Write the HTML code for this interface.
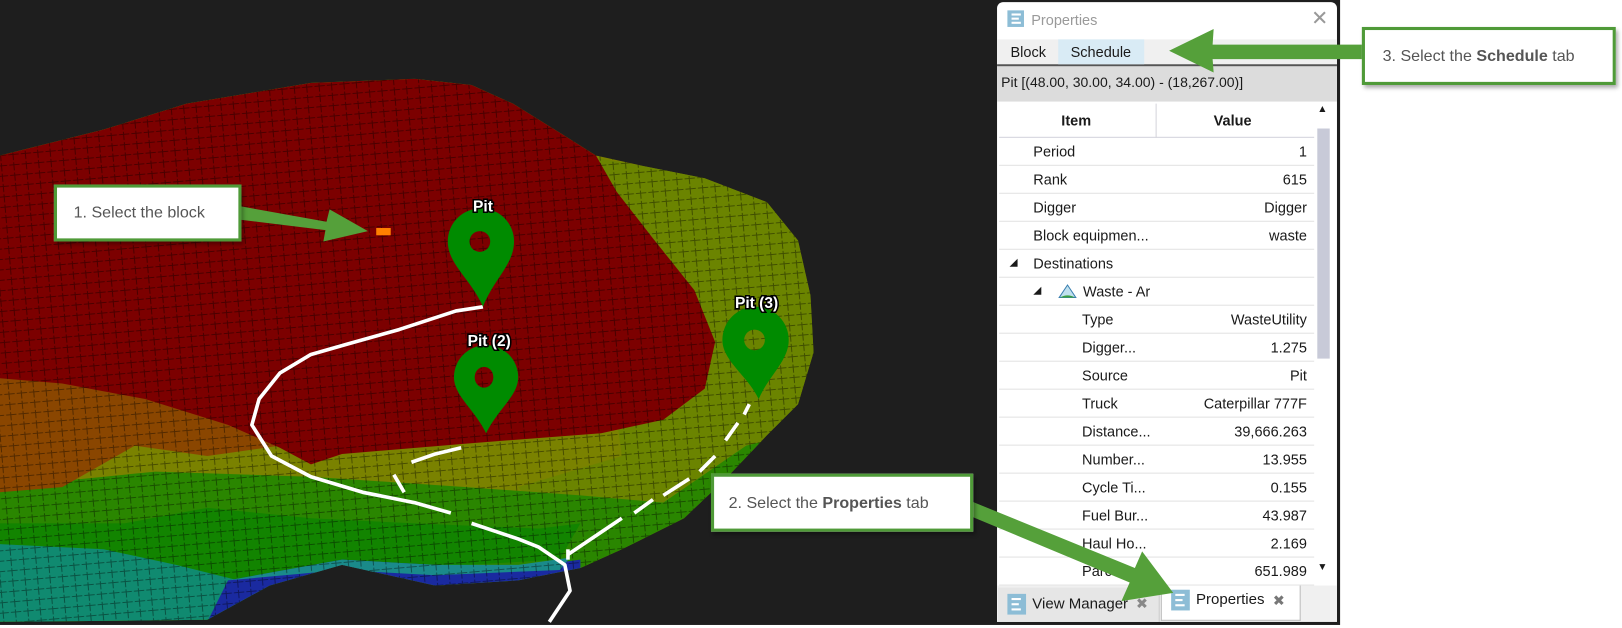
<!DOCTYPE html>
<html><head><meta charset="utf-8"><style>
html,body{margin:0;padding:0;width:1622px;height:628px;overflow:hidden;background:#fff;font-family:"Liberation Sans",sans-serif}
#w{position:absolute;left:0;top:0;width:1565px;height:606px;transform:scale(1.03642);transform-origin:0 0}
.abs{position:absolute}
#panel{position:absolute;left:962px;top:2px;width:328px;height:598px;background:#fff;border-radius:6px 6px 0 0;overflow:hidden;font-size:14px;color:#1a1a1a}
.row{position:absolute;left:2px;width:304px;height:27px;border-bottom:1px solid #e2e2e2;box-sizing:border-box;line-height:26px}
.row .l{position:absolute}
.row .v{position:absolute;right:7px}
.ico{position:absolute;width:16px;height:16px;background:#8dbdd6}
.ico i{position:absolute;left:4px;height:2px;background:#fff}
.call{position:absolute;background:#fff;border:3px solid #4f9a38;box-sizing:border-box;color:#555;font-size:15.5px;box-shadow:2px 3px 4px rgba(0,0,0,.35)}
</style></head><body><div id="w">
<div class="abs" style="left:0;top:0;width:1293px;height:603px;background:#1e1e1e"></div>
<svg class="abs" style="left:0;top:0" width="1293" height="603" viewBox="0 0 1293 603">
<defs>
<pattern id="g" width="12" height="10" patternUnits="userSpaceOnUse" patternTransform="rotate(-5)">
<path d="M0 9.5H12M11.5 0V10" stroke="#000" stroke-opacity=".4" stroke-width="1" stroke-dasharray="5 2" fill="none"/>
</pattern>
<clipPath id="c"><path d="M0 150L100 125L180 100L300 80L400 76L455 82L495 100L540 128L575 150L620 160L680 172L740 195L770 232L782 285L785 340L770 390L740 420L700 462L660 500L600 530L560 548L500 560L420 565L330 545L260 565L200 598L0 600Z"/></clipPath>
</defs>
<g clip-path="url(#c)">
<rect x="0" y="0" width="800" height="603" fill="#7a8200"/>
<path d="M560 150L620 160L680 172L740 195L770 232L782 285L785 340L770 390L740 420L700 462L660 500L600 530L560 548L500 470L600 440Z" fill="#6b8400"/>
<path d="M0 470L150 455L300 460L450 470L560 478L640 485L720 430L760 420L700 480L640 520L560 560L300 600L0 600Z" fill="#2a8600"/>
<path d="M0 505L120 505L200 490L300 500L400 505L520 510L560 505L540 540L450 545L330 545L260 565L0 600Z" fill="#128400"/>
<path d="M0 525L100 530L170 545L230 560L270 572L200 600L0 600Z" fill="#108a70"/>
<path d="M220 560L330 540L420 545L500 548L560 540L560 560L500 565L420 575L330 560L260 580L200 600Z" fill="#1a2aa0"/>
<path d="M220 560L330 540L420 545L500 545L550 538L540 550L420 555L330 550Z" fill="#1a8a8a"/>
<path d="M0 360L130 380L240 400L270 430L200 440L130 430L60 470L0 475Z" fill="#8a4600"/>
<path d="M0 150L100 125L180 100L300 80L400 76L455 82L495 100L540 128L575 150L595 185L630 230L670 280L690 330L680 375L640 405L580 418L450 428L330 438L300 448L270 432L220 410L140 385L60 370L0 365Z" fill="#7c0000"/>
<rect x="0" y="0" width="800" height="603" fill="url(#g)"/>
</g>
<rect x="363" y="220" width="14" height="7" fill="#ff8000"/>
<g fill="none" stroke="#fff" stroke-width="3.5" stroke-linejoin="round">
<path d="M466 296L440 300L385 318L335 332L300 342L270 360L250 385L243 410L262 440L300 460L350 475L400 485L435 495"/>
<path d="M455 505L500 520L520 528L545 545L550 570L530 600"/>
<path d="M397 446L420 438L445 432"/>
<path d="M380 458L390 475"/>
<path d="M548 540L548 530"/>
<path d="M548 535L600 500M612 495L630 482M640 478L665 462M675 455L690 440M700 425L712 408M718 400L723 390"/>
</g>
<g fill="#008b00" fill-rule="evenodd">
<path d="M466 296C455 270 432 255 432 233A32 32 0 0 1 496 233C496 255 476 270 466 296ZM453 233A10 10 0 1 0 473 233A10 10 0 1 0 453 233Z"/>
<path d="M469 418C458 395 438 382 438 364A31 31 0 0 1 500 364C500 382 480 395 469 418ZM458 364A9 10 0 1 0 476 364A9 10 0 1 0 458 364Z"/>
<path d="M732 385C721 362 697 348 697 328A32 32 0 0 1 761 328C761 348 742 362 732 385ZM718 328A10 10 0 1 0 738 328A10 10 0 1 0 718 328Z"/>
</g>
<g font-family="Liberation Sans,sans-serif" font-weight="bold" font-size="15" fill="#fff" stroke="#000" stroke-width="3" paint-order="stroke" text-anchor="middle">
<text x="466" y="204">Pit</text><text x="472" y="334">Pit (2)</text><text x="730" y="297">Pit (3)</text>
</g>
<path d="M232 199L315 214L318 202L355 223L312 233L314 222L232 212Z" fill="#55a03a"/>
</svg>
<div class="call" style="left:52px;top:178px;width:181px;height:55px;line-height:50px;padding-left:16px">1. Select the block</div>

<div id="panel">
<div class="ico" style="left:10px;top:8px"><i style="top:3px;width:9px"></i><i style="top:7px;width:7px"></i><i style="top:11px;width:9px"></i></div>
<div class="abs" style="left:33px;top:9px;color:#9a9a9a">Properties</div>
<div class="abs" style="left:303px;top:3px;color:#999;font-size:20px">✕</div>
<div class="abs" style="left:0;top:36px;width:328px;height:24px;background:#f0f0f0;border-bottom:2px solid #555"></div>
<div class="abs" style="left:13px;top:40px">Block</div>
<div class="abs" style="left:59px;top:36px;width:83px;height:24px;background:#d9ebf5"></div>
<div class="abs" style="left:71px;top:40px">Schedule</div>
<div class="abs" style="left:0;top:62px;width:328px;height:34px;background:#dcdcdc"></div>
<div class="abs" style="left:4px;top:70px;font-size:13.5px">Pit [(48.00, 30.00, 34.00) - (18,267.00)]</div>
<div class="abs" style="left:2px;top:98px;width:304px;height:33px;border-bottom:1px solid #d4d4dc;box-sizing:border-box"></div>
<div class="abs" style="left:153px;top:98px;width:1px;height:33px;background:#d4d4dc"></div>
<div class="abs" style="left:62px;top:106px;font-weight:bold">Item</div>
<div class="abs" style="left:209px;top:106px;font-weight:bold">Value</div>
<div class="row" style="top:131px"><span class="l" style="left:33px">Period</span><span class="v">1</span></div>
<div class="row" style="top:158px"><span class="l" style="left:33px">Rank</span><span class="v">615</span></div>
<div class="row" style="top:185px"><span class="l" style="left:33px">Digger</span><span class="v">Digger</span></div>
<div class="row" style="top:212px"><span class="l" style="left:33px">Block equipmen...</span><span class="v">waste</span></div>
<div class="row" style="top:239px"><span class="l" style="left:10px;font-size:10px">◢</span><span class="l" style="left:33px">Destinations</span></div>
<div class="row" style="top:266px"><span class="l" style="left:33px;font-size:10px">◢</span><svg class="l" style="left:56px;top:4px" width="20" height="18"><path d="M2 15L10 3L18 15Z" fill="#bfe0ee" stroke="#3a7fb0"/><path d="M3 15Q10 11 17 15Z" fill="#3aa040"/></svg><span class="l" style="left:81px">Waste - Ar</span></div>
<div class="row" style="top:293px"><span class="l" style="left:80px">Type</span><span class="v">WasteUtility</span></div>
<div class="row" style="top:320px"><span class="l" style="left:80px">Digger...</span><span class="v">1.275</span></div>
<div class="row" style="top:347px"><span class="l" style="left:80px">Source</span><span class="v">Pit</span></div>
<div class="row" style="top:374px"><span class="l" style="left:80px">Truck</span><span class="v">Caterpillar 777F</span></div>
<div class="row" style="top:401px"><span class="l" style="left:80px">Distance...</span><span class="v">39,666.263</span></div>
<div class="row" style="top:428px"><span class="l" style="left:80px">Number...</span><span class="v">13.955</span></div>
<div class="row" style="top:455px"><span class="l" style="left:80px">Cycle Ti...</span><span class="v">0.155</span></div>
<div class="row" style="top:482px"><span class="l" style="left:80px">Fuel Bur...</span><span class="v">43.987</span></div>
<div class="row" style="top:509px"><span class="l" style="left:80px">Haul Ho...</span><span class="v">2.169</span></div>
<div class="row" style="top:536px"><span class="l" style="left:80px">Parcel</span><span class="v">651.989</span></div>
<div class="abs" style="left:309px;top:122px;width:12px;height:222px;background:#c8cad8"></div>
<div class="abs" style="left:309px;top:98px;font-size:10px">▲</div>
<div class="abs" style="left:309px;top:540px;font-size:10px">▼</div>
<div class="abs" style="left:0;top:563px;width:328px;height:35px;background:#f0f0f0"></div>
<div class="abs" style="left:1px;top:565px;width:155px;height:33px;background:#e6e6e6;border-right:1px solid #ccc"></div>
<div class="ico" style="left:10px;top:571px;width:18px;height:20px"><i style="top:4px;width:9px"></i><i style="top:9px;width:7px"></i><i style="top:14px;width:9px"></i></div>
<div class="abs" style="left:34px;top:573px;font-size:14.5px">View Manager</div>
<div class="abs" style="left:134px;top:572px;color:#888;font-size:14px">✖</div>
<div class="abs" style="left:158px;top:563px;width:133px;height:33px;background:#fff;border:1px solid #bbb;border-top:none"></div>
<div class="ico" style="left:168px;top:567px;width:18px;height:20px"><i style="top:4px;width:9px"></i><i style="top:9px;width:7px"></i><i style="top:14px;width:9px"></i></div>
<div class="abs" style="left:192px;top:569px;font-size:14.5px">Properties</div>
<div class="abs" style="left:266px;top:569px;color:#777;font-size:14px">✖</div>
</div>

<svg class="abs" style="left:900px;top:0" width="440" height="606" viewBox="900 0 440 606">
<path d="M938 484L1095 548L1102 532L1132 572L1082 580L1090 562L934 497Z" fill="#55a03a"/>
<path d="M1128 49L1171 28L1170 43L1320 43L1320 57L1170 57L1171 70Z" fill="#55a03a"/>
</svg>
<div class="call" style="left:686px;top:457px;width:253px;height:56px;line-height:52px;padding-left:14px">2. Select the <b>Properties</b> tab</div>
<div class="call" style="left:1314px;top:26px;width:245px;height:56px;line-height:52px;padding-left:17px">3. Select the <b>Schedule</b> tab</div>
</div></body></html>
